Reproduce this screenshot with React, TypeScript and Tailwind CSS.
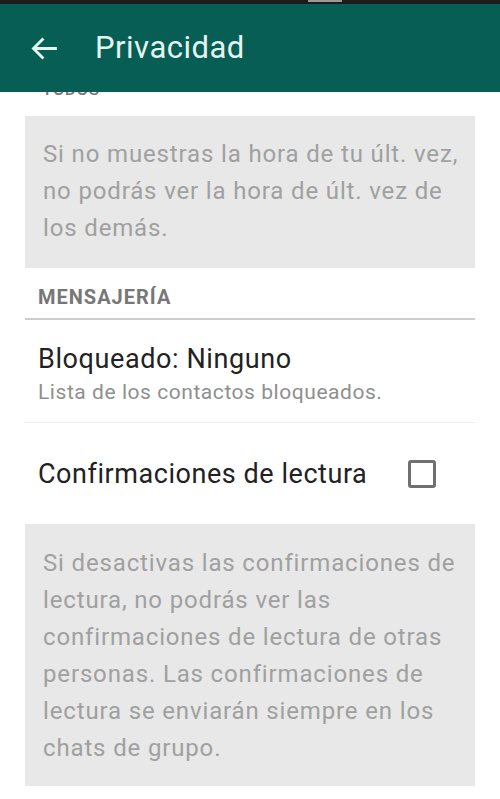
export default function App() {
  return (
    <div className="w-[500px] h-[799px] overflow-hidden bg-white font-['Roboto',sans-serif]">
      {/* status bar (cut off) */}
      <div className="h-[4px] bg-[#1b1c1c] flex">
        <div className="ml-[308px] w-[34px] h-[2px] bg-[#9a9a9a]" />
      </div>

      {/* toolbar */}
      <div className="h-[88px] bg-[#075e55] flex items-center">
        <svg className="ml-[28px] w-[33px] h-[33px]" viewBox="0 0 24 24" fill="none">
          <path d="M21 12H4M11.2 4.8L4 12l7.2 7.2" stroke="#e6f4f1" strokeWidth="2.1" />
        </svg>
        <h1 className="ml-[34px] text-[31px] leading-[36px] text-[#e6f4f1] tracking-[0.5px]">Privacidad</h1>
      </div>

      {/* previous option, scrolled under the toolbar */}
      <div className="h-[24px] overflow-hidden">
        <p className="ml-[42px] -mt-[12px] text-[17px] leading-[18px] font-medium text-[#777] tracking-[0.5px]">TODOS</p>
      </div>

      <div className="mx-[25px]">
        {/* last seen note */}
        <div className="bg-[#e8e8e8] pt-[20px] pb-[21px] pl-[18px] pr-[14px] text-[24px] leading-[37px] text-[#a0a0a0] tracking-[0.85px]">
          Si no muestras la hora de tu últ. vez, no podrás ver la hora de últ. vez de los demás.
        </div>

        {/* Mensajería */}
        <div className="h-[52px] border-b-2 border-[#cdcdcd] pt-[18px] px-[13px]">
          <p className="text-[20px] leading-[22px] font-bold text-[#777] tracking-[1px]">MENSAJERÍA</p>
        </div>

        <div className="border-b border-[#ededed] pt-[23px] pb-[18px] px-[13px]">
          <p className="text-[27px] leading-[32px] text-[#222] tracking-[0.6px]">Bloqueado: Ninguno</p>
          <p className="mt-[5px] text-[21px] leading-[24px] text-[#8f8f8f] tracking-[0.55px]">Lista de los contactos bloqueados.</p>
        </div>

        <div className="h-[101px] flex items-center justify-between pl-[13px] pr-[39px]">
          <p className="text-[27px] leading-[32px] text-[#222] tracking-[0.55px]">Confirmaciones de lectura</p>
          <div className="w-[28px] h-[28px] border-[3px] border-[#707070] rounded-[3px]" />
        </div>

        {/* read receipts note */}
        <div className="bg-[#e8e8e8] pt-[21px] pb-[19px] pl-[18px] pr-[14px] text-[24px] leading-[37px] text-[#a0a0a0] tracking-[0.85px]">
          Si desactivas las confirmaciones de lectura, no podrás ver las confirmaciones de lectura de otras personas. Las confirmaciones de lectura se enviarán siempre en los chats de grupo.
        </div>
      </div>
    </div>
  );
}
